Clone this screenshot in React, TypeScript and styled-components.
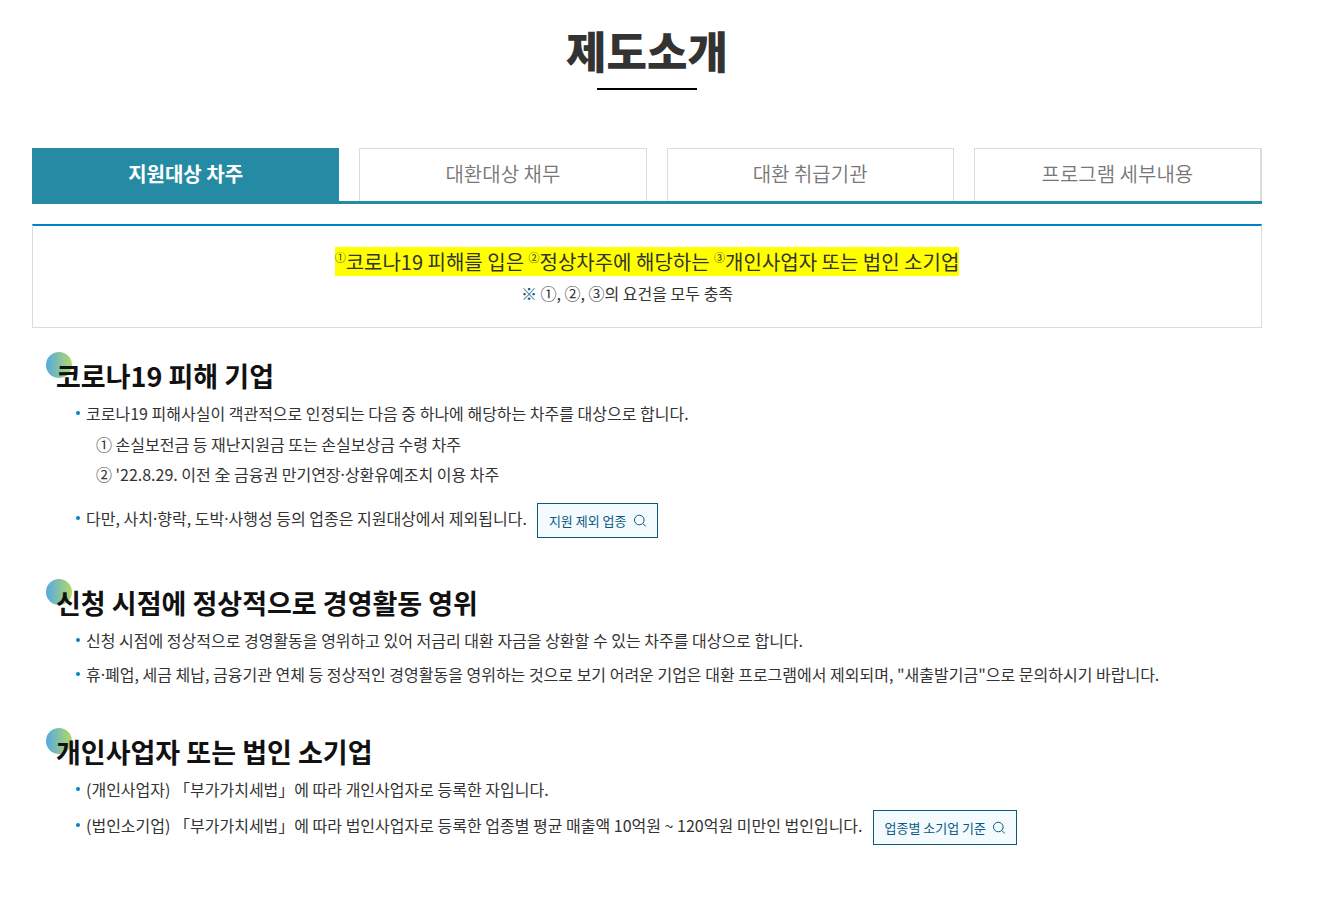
import React, { useState } from "react";
import styled, { createGlobalStyle } from "styled-components";

const GlobalStyle = createGlobalStyle`
  *, *::before, *::after { box-sizing: border-box; }
  body {
    margin: 0;
    background: #fff;
    color: #333;
    font-family: "Noto Sans CJK KR", "Noto Sans", sans-serif;
    font-size: 16px;
    line-height: 26px;
  }
  h1, h2, p, ul, ol { margin: 0; padding: 0; }
  ul, ol { list-style: none; }
`;

const Page = styled.main`
  padding: 16px 68px 60px 32px;
`;

const PageTitle = styled.h1`
  display: flex;
  flex-direction: column;
  align-items: center;
  gap: 4px;
  font-size: 44px;
  line-height: 68px;
  font-weight: 900;

  &::after {
    content: "";
    width: 100px;
    height: 2px;
    background: #000;
  }
`;

const Tabs = styled.div`
  display: flex;
  gap: 20px;
  margin-top: 58px;
  border-bottom: 3px solid #258ba5;
`;

const Tab = styled.button<{ $active: boolean }>`
  flex: ${(p) => (p.$active ? "1 1 22px" : "1 1 0")};
  height: 53px;
  padding: 0 0 2px;
  border: 1px solid ${(p) => (p.$active ? "#258ba5" : "#dcdcdc")};
  border-bottom: 0;
  background: ${(p) => (p.$active ? "#258ba5" : "#fff")};
  color: ${(p) => (p.$active ? "#fff" : "#777")};
  font-family: inherit;
  font-size: 20px;
  line-height: 30px;
  font-weight: ${(p) => (p.$active ? 700 : 350)};
  cursor: pointer;

  &:last-child { border-right-width: 2px; }
`;

const Summary = styled.div`
  margin-top: 20px;
  padding: 20px 20px 19px;
  border: 1px solid #dcdcdc;
  border-top: 2px solid #0083cb;
  text-align: center;
`;

const Lead = styled.p`
  font-size: 20px;
  line-height: 32px;

  mark {
    background: #ff0;
    color: inherit;
  }

  sup {
    font-size: 11px;
    line-height: 0;
    vertical-align: 8px;
  }
`;

const Note = styled.p`
  padding-right: 40px;
  line-height: 30px;

  span { color: #0c587f; }
`;

const Section = styled.section<{ $first?: boolean }>`
  padding: 0 14px;
  margin-top: ${(p) => (p.$first ? "24px" : "41px")};
`;

const SectionTitle = styled.h2`
  position: relative;
  z-index: 0;
  padding: 5px 0 5px 10px;
  color: #111;
  font-size: 27px;
  line-height: 38px;
  font-weight: 700;

  &::before {
    content: "";
    position: absolute;
    z-index: -1;
    top: 0;
    left: 0;
    width: 26px;
    height: 26px;
    border-radius: 50%;
    background: linear-gradient(90deg, #55a9e2, #b3d968);
  }
`;

const BulletList = styled.ul`
  display: flex;
  flex-direction: column;
  gap: 8px;
  padding-left: 30px;
`;

const Bullet = styled.li<{ $tall?: boolean }>`
  display: grid;
  grid-template-columns: 4px 1fr;
  column-gap: 6px;
  align-items: start;

  &::before {
    content: "";
    width: 4px;
    height: 4px;
    margin-top: ${(p) => (p.$tall ? "13px" : "11px")};
    border-radius: 50%;
    background: #0083cb;
  }
`;

const Row = styled.div`
  display: flex;
  align-items: center;
  gap: 10px;

  p { padding-bottom: 6px; }
`;

const SubList = styled.ol`
  padding: 3px 0 6px 10px;
  line-height: 30px;
`;

/* The Korean face has a half-em middle dot; the Latin one is narrower. */
const MiddleDot = styled.span`
  font-family: "Noto Sans", sans-serif;
  line-height: 1;
`;

const Dot = () => <MiddleDot>·</MiddleDot>;

const LookupButton = styled.button`
  display: flex;
  align-items: center;
  gap: 6px;
  height: 35px;
  padding: 0 10px 0 11px;
  border: 1px solid #0c587f;
  background: #f3fbff;
  color: #0c587f;
  font-family: inherit;
  font-size: 13px;
  line-height: 20px;
  white-space: nowrap;
  cursor: pointer;
`;

const SearchIcon = () => (
  <svg width="14" height="14" viewBox="0 0 14 14" fill="none" stroke="currentColor" aria-hidden="true">
    <circle cx="6.3" cy="6" r="4.8" />
    <path d="M9.8 9.5L12.8 12.5" />
  </svg>
);

const tabs = ["지원대상 차주", "대환대상 채무", "대환 취급기관", "프로그램 세부내용"];

export default function App() {
  const [active, setActive] = useState(0);

  return (
    <>
      <GlobalStyle />
      <Page>
        <PageTitle>제도소개</PageTitle>
        <Tabs role="tablist">
          {tabs.map((label, i) => (
            <Tab
              key={label}
              type="button"
              role="tab"
              aria-selected={i === active}
              $active={i === active}
              onClick={() => setActive(i)}
            >
              {label}
            </Tab>
          ))}
        </Tabs>

        <Summary>
          <Lead>
            <mark>
              <sup>①</sup>코로나19 피해를 입은 <sup>②</sup>정상차주에 해당하는 <sup>③</sup>개인사업자 또는 법인 소기업
            </mark>
          </Lead>
          <Note><span>※</span> ①, ②, ③의 요건을 모두 충족</Note>
        </Summary>

        <Section $first>
          <SectionTitle>코로나19 피해 기업</SectionTitle>
          <BulletList>
            <Bullet>
              <div>
                <p>코로나19 피해사실이 객관적으로 인정되는 다음 중 하나에 해당하는 차주를 대상으로 합니다.</p>
                <SubList>
                  <li>① 손실보전금 등 재난지원금 또는 손실보상금 수령 차주</li>
                  <li>② '22.8.29. 이전 全 금융권 만기연장<Dot />상환유예조치 이용 차주</li>
                </SubList>
              </div>
            </Bullet>
            <Bullet $tall>
              <Row>
                <p>다만, 사치<Dot />향락, 도박<Dot />사행성 등의 업종은 지원대상에서 제외됩니다.</p>
                <LookupButton type="button">지원 제외 업종<SearchIcon /></LookupButton>
              </Row>
            </Bullet>
          </BulletList>
        </Section>

        <Section>
          <SectionTitle>신청 시점에 정상적으로 경영활동 영위</SectionTitle>
          <BulletList>
            <Bullet>
              <p>신청 시점에 정상적으로 경영활동을 영위하고 있어 저금리 대환 자금을 상환할 수 있는 차주를 대상으로 합니다.</p>
            </Bullet>
            <Bullet>
              <p>휴<Dot />폐업, 세금 체납, 금융기관 연체 등 정상적인 경영활동을 영위하는 것으로 보기 어려운 기업은 대환 프로그램에서 제외되며, "새출발기금"으로 문의하시기 바랍니다.</p>
            </Bullet>
          </BulletList>
        </Section>

        <Section>
          <SectionTitle>개인사업자 또는 법인 소기업</SectionTitle>
          <BulletList>
            <Bullet>
              <p>(개인사업자) 「부가가치세법」에 따라 개인사업자로 등록한 자입니다.</p>
            </Bullet>
            <Bullet $tall>
              <Row>
                <p>(법인소기업) 「부가가치세법」에 따라 법인사업자로 등록한 업종별 평균 매출액 10억원 ~ 120억원 미만인 법인입니다.</p>
                <LookupButton type="button">업종별 소기업 기준<SearchIcon /></LookupButton>
              </Row>
            </Bullet>
          </BulletList>
        </Section>
      </Page>
    </>
  );
}
